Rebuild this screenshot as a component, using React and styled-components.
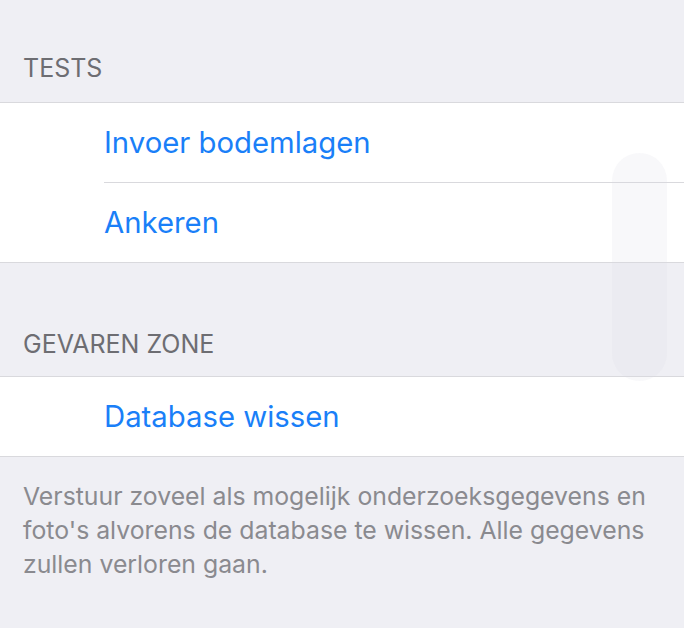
import React from "react";
import styled, { createGlobalStyle } from "styled-components";

const Global = createGlobalStyle`
  html, body { margin: 0; padding: 0; background: #efeff4; }
  body { font-family: Inter, "Noto Sans", sans-serif; -webkit-font-smoothing: antialiased; }
`;

const Page = styled.div`
  position: relative;
  width: 684px;
  height: 628px;
  overflow: hidden;
  background: #efeff4;
`;

const Header = styled.div`
  padding: ${(p) => (p.$first ? "54px" : "67px")} 23px ${(p) => (p.$first ? "20px" : "18px")};
  font-size: 25px;
  line-height: 28px;
  color: #6d6d72;
  text-transform: uppercase;
`;

const Group = styled.div`
  background: #fff;
  border-top: 1px solid #d9d9dd;
  border-bottom: 1px solid #d9d9dd;
`;

const Row = styled.div`
  display: flex;
  align-items: center;
  height: 79px;
  margin-left: 104px;
  font-size: 29.3px;
  color: #1a7ff8;
  border-top: ${(p) => (p.$sep ? "1px solid #d9d9dd" : "none")};
`;

const Footer = styled.div`
  padding: 22px 23px 0;
  font-size: 24.8px;
  line-height: 34px;
  color: #8a8a8f;
`;

const ScrollThumb = styled.div`
  position: absolute;
  left: 612px;
  top: 153px;
  width: 55px;
  height: 228px;
  border-radius: 28px;
  background: rgba(222, 222, 228, 0.2);
`;

export default function App() {
  return (
    <Page>
      <Global />
      <Header $first>Tests</Header>
      <Group>
        <Row>Invoer bodemlagen</Row>
        <Row $sep>Ankeren</Row>
      </Group>
      <Header>Gevaren zone</Header>
      <Group>
        <Row>Database wissen</Row>
      </Group>
      <Footer>
        Verstuur zoveel als mogelijk onderzoeksgegevens en foto's alvorens de
        database te wissen. Alle gegevens zullen verloren gaan.
      </Footer>
      <ScrollThumb />
    </Page>
  );
}
